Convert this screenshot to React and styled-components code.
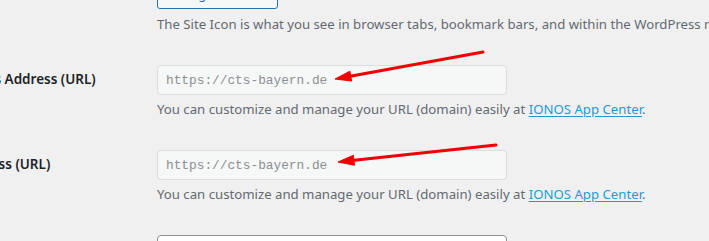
import React from "react";
import styled, { createGlobalStyle } from "styled-components";

const GlobalStyle = createGlobalStyle`
  html, body { margin: 0; padding: 0; }
  body {
    background: #f0f0f1;
    color: #3c434a;
    font-family: "Noto Sans", "Open Sans", sans-serif;
    font-size: 13px;
    overflow: hidden;
    width: 709px;
    height: 241px;
    position: relative;
  }
`;

const Page = styled.div`
  position: relative;
  width: 709px;
  height: 241px;
  overflow: hidden;
`;

const FormTable = styled.div`
  margin-top: -35px;
  margin-left: -69px;
  display: flex;
  flex-direction: column;
`;

const Row = styled.div`
  display: grid;
  grid-template-columns: 216px 1fr;
  height: 85px;
`;

const Label = styled.div`
  padding: 20px 10px 20px 0;
  font-weight: 600;
  font-size: 13.5px;
  line-height: 18px;
  color: #1d2327;
  white-space: nowrap;
`;

const Field = styled.div`
  padding: 15px 10px;
  display: flex;
  flex-direction: column;
  align-items: flex-start;
`;

const Button = styled.button`
  height: 29px;
  padding: 0 10px;
  border: 1px solid #2271b1;
  border-radius: 3px;
  background: #f6f7f7;
  color: #2271b1;
  font-family: "Noto Sans", sans-serif;
  font-size: 12.5px;
  line-height: 27px;
  white-space: nowrap;
`;

const Description = styled.p`
  margin: ${(p) => p.$gap}px 0 0;
  font-size: 13.2px;
  line-height: 21px;
  color: #646970;
  white-space: nowrap;
`;

const Link = styled.a`
  color: #1a9dd6;
  text-decoration: underline;
  text-underline-offset: 2px;
`;

const TextInput = styled.input`
  box-sizing: border-box;
  width: 350px;
  height: 30px;
  margin: 0;
  padding: 0 8px;
  border: 1px solid ${(p) => (p.disabled ? "#dcdcde" : "#8c8f94")};
  border-radius: 4px;
  background: ${(p) => (p.disabled ? "#f6f7f7" : "#ffffff")};
  color: #8c8f94;
  font-family: "Liberation Mono", monospace;
  font-size: 12.8px;
  outline: none;
  &:disabled {
    color: #8c8f94;
    -webkit-text-fill-color: #8c8f94;
  }
`;

const Annotations = styled.svg`
  position: absolute;
  left: 0;
  top: 0;
  pointer-events: none;
`;

function Arrow({ tail, tip, head = 16, half = 5 }) {
  const dx = tip[0] - tail[0];
  const dy = tip[1] - tail[1];
  const len = Math.hypot(dx, dy);
  const ux = dx / len;
  const uy = dy / len;
  const bx = tip[0] - head * ux;
  const by = tip[1] - head * uy;
  const nx = -uy * half;
  const ny = ux * half;
  return (
    <g fill="#f20000" stroke="#f20000">
      <line x1={tail[0]} y1={tail[1]} x2={bx + ux * 2} y2={by + uy * 2} strokeWidth="3" strokeLinecap="round" />
      <polygon points={`${tip[0]},${tip[1]} ${bx + nx},${by + ny} ${bx - nx},${by - ny}`} strokeWidth="1" strokeLinejoin="round" />
    </g>
  );
}

const urlHelp = (
  <>
    You can customize and manage your URL (domain) easily at <Link href="#">IONOS App Center</Link>.
  </>
);

export default function App() {
  return (
    <>
      <GlobalStyle />
      <Page>
        <FormTable>
          <Row>
            <Label>Site Icon</Label>
            <Field>
              <Button type="button">Change Site Icon</Button>
              <Description $gap={5}>
                The Site Icon is what you see in browser tabs, bookmark bars, and within the WordPress mobile apps. Upload one here!
              </Description>
            </Field>
          </Row>
          <Row>
            <Label>WordPress Address (URL)</Label>
            <Field>
              <TextInput type="url" value="https://cts-bayern.de" disabled readOnly />
              <Description $gap={4}>{urlHelp}</Description>
            </Field>
          </Row>
          <Row>
            <Label>Site Address (URL)</Label>
            <Field>
              <TextInput type="url" value="https://cts-bayern.de" disabled readOnly />
              <Description $gap={4}>{urlHelp}</Description>
            </Field>
          </Row>
          <Row>
            <Label>Administration Email Address</Label>
            <Field>
              <TextInput type="email" defaultValue="" />
            </Field>
          </Row>
        </FormTable>
        <Annotations width="709" height="241" viewBox="0 0 709 241">
          <Arrow tail={[483, 52]} tip={[335, 79]} />
          <Arrow tail={[496, 145]} tip={[338, 162]} />
        </Annotations>
      </Page>
    </>
  );
}
